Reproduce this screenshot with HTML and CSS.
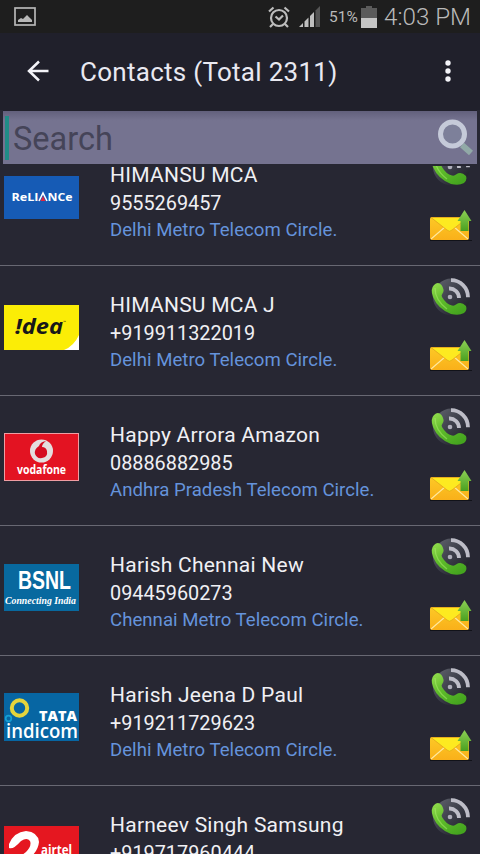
FILE: index.html
```html
<!DOCTYPE html>
<html lang="en">
<head>
<meta charset="utf-8">
<title>Contacts</title>
<link rel="stylesheet" href="styles.css">
</head>
<body>
<svg width="0" height="0" class="defs" aria-hidden="true">
  <defs>
    <linearGradient id="green" x1="0" y1="0" x2="0.7" y2="1"><stop offset="0" stop-color="#96df50"/><stop offset=".5" stop-color="#5fbb2b"/><stop offset="1" stop-color="#45a51f"/></linearGradient>
    <linearGradient id="arrow" x1="0" y1="0" x2="0" y2="1"><stop offset="0" stop-color="#8ccf55"/><stop offset="1" stop-color="#4aa01f"/></linearGradient>
    <linearGradient id="disc" x1="0" y1="0" x2="1" y2="1"><stop offset="0" stop-color="#656772"/><stop offset=".5" stop-color="#3b3d48"/><stop offset="1" stop-color="#171820"/></linearGradient>
    <linearGradient id="mail" x1="0" y1="0" x2="0" y2="1"><stop offset="0" stop-color="#fdc926"/><stop offset="1" stop-color="#f9b01a"/></linearGradient>
    <symbol id="call" viewBox="0 0 42 42">
      <circle cx="22.500" cy="20" r="18.500" fill="url(#disc)"/>
      <g fill="none" stroke="#bdbdc7" stroke-width="3.800"><path d="M22 3.200a17 17 0 0 1 17 17"/><path d="M20 11.500a9.500 9.500 0 0 1 10 9.500"/></g>
      <circle cx="21" cy="20" r="2.300" fill="#aeaeba"/>
      <path d="M5 8Q9 4 12.500 8Q16 13 13.500 16.500Q12 18 13 20Q17 27 23 28.500Q25.500 29 27 27.500Q32 24 37 29Q38.500 33 35 36Q30 39 22 37Q9 32 4 20Q1 12 5 8Z" fill="url(#green)"/>
      <path d="M6 11Q6 23 18 32" fill="none" stroke="#b0ef70" stroke-width="1.300" opacity=".5"/>
    </symbol>
    <symbol id="message" viewBox="0 0 44 34">
      <path d="M1 31.500H43" stroke="#111219" stroke-width="1.200"/>
      <rect x="1" y="8" width="39" height="23" rx="2" fill="url(#mail)"/>
      <path d="M2 30L16 18M39 30L25 18" stroke="#ffe9a0" stroke-width="1.100"/>
      <path d="M2 8.500H39L23 21Q20.500 23.500 18 21Z" fill="#fdea20" stroke="#e2a51a" stroke-width=".8"/>
      <path d="M35.500 1L42.500 12H39.500V22H31.500V12H28.500Z" fill="url(#arrow)"/>
    </symbol>
  </defs>
</svg>
<div class="phone">
  <div class="status">
    <svg class="picture" viewBox="0 0 22 19"><rect x="1" y="1" width="20" height="17" fill="none" stroke="#b7b7b7" stroke-width="1.700"/><path d="M4 15v-2l3-2 2 1 4-4 3 3 2 2v2z" fill="#b7b7b7"/></svg>
    <svg class="alarm" viewBox="0 0 22 22"><g fill="none" stroke="#bdbdbd" stroke-width="2.200"><circle cx="11" cy="12" r="8"/><path d="M7.500 10.500l3.500 3 4-4M1 5.500L5.500 1.500M21 5.500L16.500 1.500M5 18l-3 3M17 18l3 3"/></g></svg>
    <svg class="signal" viewBox="0 0 22 21"><path d="M0 21l4-4v4zM5.500 15.500l4-4V21h-4zM11 10l4-4v15h-4z" fill="#c0c0c0"/><path d="M16.500 4.500L21 0v21h-4.500z" fill="#555"/></svg>
    <span class="percent">51%</span>
    <svg class="battery" viewBox="0 0 16 22"><path d="M0 2h5V0h6v2h5v20H0z" fill="#5b5b5b"/><path d="M0 12h16v10H0z" fill="#c5c5c5"/></svg>
    <span class="clock">4:03 PM</span>
  </div>
  <header class="bar">
    <svg class="back" viewBox="0 0 22 22"><path d="M21.500 11H2M12 1.500L2 11l10 9.500" fill="none" stroke="#f3f3f8" stroke-width="2.500"/></svg>
    <h1>Contacts (Total 2311)</h1>
    <svg class="more" viewBox="0 0 6 22"><g fill="#f3f3f8"><circle cx="3" cy="3" r="2.700"/><circle cx="3" cy="11" r="2.700"/><circle cx="3" cy="19" r="2.700"/></g></svg>
  </header>
  <div class="search"><span class="caret"></span><span class="hint">Search</span>
    <svg class="lens" viewBox="0 0 38 38"><path d="M25 26L34 34" stroke="#91a9a7" stroke-width="6"/><circle cx="15.500" cy="15" r="12" fill="#7d809a" stroke="#c5cad9" stroke-width="5"/></svg>
  </div>
  <main class="list">
    <article class="row first">
      <svg class="logo" viewBox="0 0 75 48"><rect y="3" width="75" height="43" fill="#165bb5"/><g class="reliance"><text x="7.500" y="28" textLength="27" lengthAdjust="spacingAndGlyphs">ReLI</text><text x="43.500" y="28" textLength="25" lengthAdjust="spacingAndGlyphs">NCe</text></g><path d="M35 28L39 20L43 28" fill="none" stroke="#fff" stroke-width="1.600"/><path d="M36.500 28l2.500-5 2.500 5z" fill="#df2540"/></svg>
      <div class="info"><p class="name">HIMANSU MCA</p><p class="number">9555269457</p><p class="circle">Delhi Metro Telecom Circle.</p></div>
      <div class="actions"><svg class="call"><use href="#call"/></svg><svg class="message"><use href="#message"/></svg></div>
    </article>
    <article class="row">
      <svg class="logo" viewBox="0 0 75 48"><rect y="2" width="75" height="45" fill="#fbed06"/><path d="M75 32v15H60q10-4 15-15z" fill="#fff"/><text class="idea" x="11" y="31" textLength="48" lengthAdjust="spacingAndGlyphs">!dea</text><text class="tm" x="59" y="21">™</text></svg>
      <div class="info"><p class="name">HIMANSU MCA J</p><p class="number">+919911322019</p><p class="circle">Delhi Metro Telecom Circle.</p></div>
      <div class="actions"><svg class="call"><use href="#call"/></svg><svg class="message"><use href="#message"/></svg></div>
    </article>
    <article class="row">
      <svg class="logo" viewBox="0 0 75 48"><rect x=".5" y=".5" width="74" height="47" fill="#e31322" stroke="#ef9da3"/><circle cx="37.500" cy="18" r="11.500" fill="#e4dede"/><path d="M42 8Q36 9 35 13Q30 16 31 21Q33 26 38 25Q44 24 43 18Q42 14 38 14Q38 11 42 8Z" fill="#d50c20"/><text class="vodafone" x="13" y="41" textLength="49" lengthAdjust="spacingAndGlyphs">vodafone</text></svg>
      <div class="info"><p class="name">Happy Arrora Amazon</p><p class="number">08886882985</p><p class="circle">Andhra Pradesh Telecom Circle.</p></div>
      <div class="actions"><svg class="call"><use href="#call"/></svg><svg class="message"><use href="#message"/></svg></div>
    </article>
    <article class="row">
      <svg class="logo" viewBox="0 0 75 48"><rect y="1" width="75" height="47" fill="#08699f"/><text class="bsnl" x="14" y="25.500" textLength="53" lengthAdjust="spacingAndGlyphs">BSNL</text><text class="connecting" x="1" y="41" textLength="71" lengthAdjust="spacingAndGlyphs">Connecting India</text></svg>
      <div class="info"><p class="name">Harish Chennai New</p><p class="number">09445960273</p><p class="circle">Chennai Metro Telecom Circle.</p></div>
      <div class="actions"><svg class="call"><use href="#call"/></svg><svg class="message"><use href="#message"/></svg></div>
    </article>
    <article class="row">
      <svg class="logo" viewBox="0 0 75 48"><rect width="75" height="48" fill="#0766a3"/><circle cx="15.500" cy="15" r="7.700" fill="none" stroke="#e4d43c" stroke-width="4"/><circle cx="4.500" cy="25.500" r="2.800" fill="none" stroke="#169fd3" stroke-width="1.700"/><text class="tata" x="35" y="27.500" textLength="38" lengthAdjust="spacingAndGlyphs">TATA</text><text class="indicom" x="2" y="45" textLength="72" lengthAdjust="spacingAndGlyphs">indicom</text></svg>
      <div class="info"><p class="name">Harish Jeena D Paul</p><p class="number">+919211729623</p><p class="circle">Delhi Metro Telecom Circle.</p></div>
      <div class="actions"><svg class="call"><use href="#call"/></svg><svg class="message"><use href="#message"/></svg></div>
    </article>
    <article class="row">
      <svg class="logo" viewBox="0 0 75 48"><rect y="3" width="75" height="45" fill="#e51720"/><path d="M5 21Q10 9 22 8Q34 9 35 19Q34 29 25 35L18 40L13 36L22 29Q28 23 26 18Q23 14 17 18Q9 27 5 25Z" fill="#fff"/><text class="airtel" x="37" y="32" textLength="31" lengthAdjust="spacingAndGlyphs">airtel</text></svg>
      <div class="info"><p class="name">Harneev Singh Samsung</p><p class="number">+919717960444</p></div>
      <div class="actions"><svg class="call"><use href="#call"/></svg></div>
    </article>
  </main>
</div>
</body>
</html>
```
FILE: styles.css
```css
* { box-sizing: border-box; }
body { margin: 0; background: #272733; font-family: Roboto, sans-serif; overflow: hidden; }
.defs { display: block; }
.phone { width: 480px; height: 854px; display: flex; flex-direction: column; overflow: hidden; }
.status { height: 33px; flex: none; background: #1e1e1e; display: flex; align-items: center; padding: 0 10px 0 14px; color: #bababa; }
.picture { width: 22px; height: 19px; }
.alarm { width: 22px; height: 22px; margin-left: auto; }
.signal { width: 22px; height: 21px; margin-left: 9px; }
.percent { width: 29px; margin-left: 8px; font-size: 15.500px; white-space: nowrap; }
.battery { width: 16px; height: 22px; margin: 0 7px 0 3px; }
.clock { width: 86px; font-size: 24.200px; font-weight: 300; white-space: nowrap; }
.bar { height: 77px; flex: none; background: #20202b; display: flex; align-items: center; padding: 0 29px 0 27px; }
.back { width: 22px; height: 22px; margin: -2px 31px 0 0; }
h1 { margin: 0; flex: 1; color: #e9e9f1; font-weight: 400; font-size: 26px; letter-spacing: 0.280px; }
.more { width: 6px; height: 22px; margin-top: -2px; }
.search { height: 54px; flex: none; margin: 0 3px; background: linear-gradient(#62607c, #757390 18%, #757390); border-top: 1px solid #20202b; display: flex; align-items: center; padding: 0 2px 0 2px; }
.caret { width: 4px; height: 44px; background: #208c87; }
.hint { flex: 1; margin: 2px 0 0 4px; font-size: 32.500px; color: #454458; }
.lens { width: 38px; height: 38px; }
.list { margin-top: 2px; flex: 1; min-height: 0; overflow: hidden; }
.row { height: 130px; border-bottom: 1px solid #686873; display: grid; grid-template-columns: 75px 1fr 44px; padding: 0 7px 0 4px; }
.first { margin-top: -30px; }
.logo { width: 75px; height: 48px; margin-top: 37px; fill: #fff; }
.info { padding: 25px 0 0 31px; color: #f0f0f4; white-space: nowrap; }
.info p { margin: 0; line-height: 28px; }
.name { font-size: 21px; letter-spacing: 0.250px; }
.info .number { font-size: 19.850px; line-height: 30px; }
.info .circle { font-size: 18.600px; line-height: 22px; letter-spacing: 0.030px; color: #6593db; }
.actions { display: flex; flex-direction: column; }
.call { width: 42px; height: 42px; margin-top: 11px; }
.message { width: 44px; height: 34px; margin-top: 20px; }
.reliance { font: bold 10.500px "Open Sans", sans-serif; }
.idea { font: italic bold 21px "Open Sans", sans-serif; fill: #171719; }
.tm { font-size: 5px; fill: #171719; }
.vodafone { font: bold 12px "Open Sans", sans-serif; }
.bsnl { font: bold 25px "Liberation Sans", sans-serif; }
.connecting { font: italic bold 10px "Liberation Serif", serif; }
.tata { font: 800 14px "Open Sans", sans-serif; }
.indicom { font: 600 19px "Open Sans", sans-serif; }
.airtel { font: bold 15px "Open Sans", sans-serif; }
```
